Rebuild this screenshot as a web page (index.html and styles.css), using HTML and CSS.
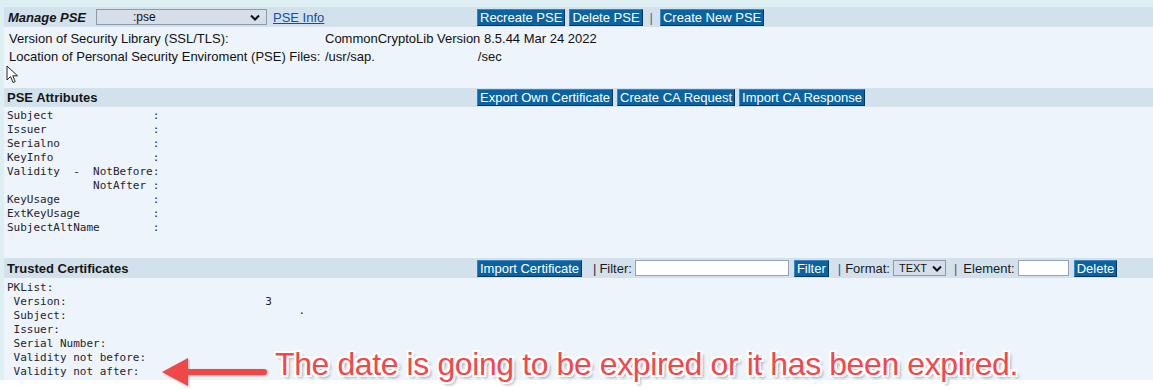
FILE: index.html
```html
<!DOCTYPE html>
<html lang="en">
<head>
    <meta charset="UTF-8">
    <title>Trust Manager - PSE</title>
    <link rel="stylesheet" href="styles.css">
</head>
<body>

<div class="page">
    <div class="panel">

        <div class="bar bar-first">
            <div class="bar-left">
                <span class="title title-main">Manage PSE</span>
                <span class="select select-pse">
                    <span class="select-text">:pse</span>
                    <svg class="chevron" width="10" height="7" viewBox="0 0 10 7"><path d="M1 1.5 L5 5.5 L9 1.5" fill="none" stroke="#111" stroke-width="2"/></svg>
                </span>
                <a class="link" href="#">PSE Info</a>
            </div>
            <div class="bar-right">
                <span class="btn">Recreate PSE</span>
                <span class="btn">Delete PSE</span>
                <span class="sep sep-gray">|</span>
                <span class="btn">Create New PSE</span>
            </div>
        </div>

        <div class="info">
            <div class="info-row">
                <span class="info-label">Version of Security Library (SSL/TLS):</span>
                <span class="info-value">CommonCryptoLib Version 8.5.44 Mar 24 2022</span>
            </div>
            <div class="info-row">
                <span class="info-label">Location of Personal Security Enviroment (PSE) Files:</span>
                <span class="info-value">/usr/sap.<span class="path-end">/sec</span></span>
            </div>
            <svg class="cursor" width="14" height="20" viewBox="0 0 14 20"><path d="M1 1 L1 15 L4.5 11.5 L7 17.5 L9.2 16.6 L6.8 10.8 L11.5 10.8 Z" fill="#fff" stroke="#222" stroke-width="1"/></svg>
        </div>

        <div class="bar">
            <div class="bar-left">
                <span class="title">PSE Attributes</span>
            </div>
            <div class="bar-right">
                <span class="btn">Export Own Certificate</span>
                <span class="btn">Create CA Request</span>
                <span class="btn">Import CA Response</span>
            </div>
        </div>

<pre class="attrs">Subject               :
Issuer                :
Serialno              :
KeyInfo               :
Validity  -  NotBefore:
             NotAfter :
KeyUsage              :
ExtKeyUsage           :
SubjectAltName        :</pre>

        <div class="bar bar-trusted">
            <div class="bar-left">
                <span class="title">Trusted Certificates</span>
            </div>
            <div class="bar-right tools">
                <span class="btn">Import Certificate</span>
                <span class="sep sep-dark sep-filter">|</span>
                <span class="tool-label">Filter:</span>
                <span class="field field-filter"></span>
                <span class="btn btn-filter">Filter</span>
                <span class="sep sep-blue">|</span>
                <span class="tool-label">Format:</span>
                <span class="select select-format">
                    <span class="select-text">TEXT</span>
                    <svg class="chevron" width="10" height="7" viewBox="0 0 10 7"><path d="M1 1.5 L5 5.5 L9 1.5" fill="none" stroke="#111" stroke-width="2"/></svg>
                </span>
                <span class="sep sep-red">|</span>
                <span class="tool-label">Element:</span>
                <span class="field field-element"></span>
                <span class="btn btn-delete">Delete</span>
            </div>
        </div>

<pre class="certs">PKList:
 Version:                              3
 Subject:                                   <span class="dot">.</span>
 Issuer:
 Serial Number:
 Validity not before:
 Validity not after:</pre>

    </div>
</div>

<div class="note">
    <svg class="note-arrow" width="110" height="34" viewBox="0 0 110 34">
        <path d="M104 16 L26 16" stroke="#f04848" stroke-width="6" stroke-linecap="round"/>
        <path d="M2 16 L28 2 L28 30 Z" fill="#f04848"/>
    </svg>
    <span class="note-text">The date is going to be expired or it has been expired.</span>
</div>

</body>
</html>
```

FILE: styles.css
```css
body {
    margin: 0;
    padding: 0;
    background-color: #fff;
    font-family: "Liberation Sans", Arial, sans-serif;
    font-size: 13px;
    color: #111;
    position: relative;
    height: 389px;
    overflow: hidden;
}

.page {
    background-color: #ddeff3;
    padding: 7px 0 0 4px;
}

.panel {
    background-color: #edf4fb;
    height: 373px;
}

.bar {
    display: flex;
    align-items: center;
    height: 19px;
    background-color: #d3e1ec;
}

.bar-first {
    height: 20px;
}

.bar-trusted {
    height: 20px;
}

.bar-left {
    display: flex;
    align-items: center;
    width: 473px;
    flex-shrink: 0;
}

.bar-right {
    display: flex;
    align-items: center;
    gap: 4px;
}

.title {
    font-weight: bold;
    padding-left: 3px;
    color: #151515;
}

.title-main {
    font-style: italic;
    padding-left: 4px;
    width: 88px;
}

.select {
    display: flex;
    align-items: center;
    justify-content: space-between;
    box-sizing: border-box;
    height: 16px;
    border: 1px solid #8e9aab;
    background-color: #d6dfe9;
    font-size: 12px;
}

.select-pse {
    width: 171px;
    padding: 0 6px 0 36px;
}

.select-format {
    width: 53px;
    padding: 0 3px 0 5px;
    font-size: 11px;
    margin-left: 3px;
}

.link {
    color: #0b4fb0;
    margin-left: 6px;
}

.btn {
    display: inline-block;
    box-sizing: border-box;
    height: 17px;
    line-height: 15px;
    padding: 0 2px;
    background-color: #0b63a1;
    color: #fff;
    border: 1px solid;
    border-color: #3b86bf #07365c #07365c #3b86bf;
    white-space: nowrap;
}

.sep {
    margin: 0 3px;
}

.sep-gray {
    color: #5a6c80;
}

.sep-dark {
    color: #1c2744;
}

.sep-blue {
    color: #2a5f95;
}

.sep-red {
    color: #9a3a3a;
}

.tools {
    gap: 0;
}

.sep-filter {
    margin: 0 3px 0 11px;
}

.field {
    box-sizing: border-box;
    height: 16px;
    border: 1px solid #98a3b3;
    background-color: #fff;
    margin-left: 3px;
}

.field-filter {
    width: 154px;
}

.field-element {
    width: 51px;
}

.btn-filter {
    margin-left: 5px;
}

.btn-filter + .sep {
    margin: 0 4px 0 9px;
}

.sep-red {
    margin: 0 6px 0 8px;
}

.btn-delete {
    margin-left: 5px;
}

.tool-label {
    color: #1a1a1a;
}

.info {
    position: relative;
    height: 61px;
    padding: 3px 0 0 5px;
    box-sizing: border-box;
}

.info-row {
    display: flex;
    line-height: 18px;
}

.info-label {
    width: 316px;
    flex-shrink: 0;
}

.path-end {
    margin-left: 103px;
}

.cursor {
    position: absolute;
    left: 2px;
    top: 38px;
}

pre {
    margin: 0;
    font-family: "DejaVu Sans Mono", "Liberation Mono", monospace;
    font-size: 11px;
    line-height: 14px;
    color: #26232e;
    padding-left: 3px;
}

.attrs {
    height: 151px;
    padding-top: 2px;
    box-sizing: border-box;
}

.certs {
    padding-top: 3px;
}

.dot {
    position: relative;
    top: -5px;
}

.note {
    position: absolute;
    left: 160px;
    top: 338px;
    display: flex;
    align-items: center;
}

.note-arrow {
    margin-top: 18px;
    filter: drop-shadow(1px 1px 1px rgba(0, 0, 0, 0.3));
}

.note-text {
    margin-left: 5px;
    font-family: "Liberation Sans", Arial, sans-serif;
    font-size: 32px;
    letter-spacing: -0.4px;
    color: #f6464a;
    white-space: nowrap;
    text-shadow:
        2px 0 0 #fff, -2px 0 0 #fff, 0 2px 0 #fff, 0 -2px 0 #fff,
        2px 2px 0 #fff, -2px -2px 0 #fff, 2px -2px 0 #fff, -2px 2px 0 #fff,
        3px 3px 3px rgba(0, 0, 0, 0.35);
}
```
